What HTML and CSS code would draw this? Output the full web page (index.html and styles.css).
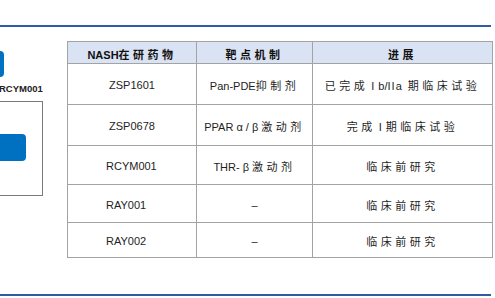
FILE: index.html
```html
<!DOCTYPE html>
<html lang="zh">
<head>
<meta charset="utf-8">
<link rel="stylesheet" href="styles.css">
</head>
<body>
<div class="page">
  <div class="rule rule-top"></div>
  <div class="content">
    <div class="side">
      <div class="node node-top"></div>
      <div class="node-label">RCYM001</div>
      <div class="frame">
        <div class="node node-inner"></div>
      </div>
    </div>
    <table class="pipeline">
      <colgroup>
        <col class="c1"><col class="c2"><col class="c3">
      </colgroup>
      <thead>
        <tr class="h-head">
          <th>NASH<span class="cjk">在研药物</span></th>
          <th><span class="cjk">靶点机制</span></th>
          <th><span class="cjk">进展</span></th>
        </tr>
      </thead>
      <tbody>
        <tr class="h41">
          <td>ZSP1601</td>
          <td>Pan-PDE<span class="cjk">抑制剂</span></td>
          <td><span class="cjk">已完成</span> <span class="roman">I</span> b/<span class="roman">II</span>a&nbsp; <span class="cjk">期临床试验</span></td>
        </tr>
        <tr class="h41">
          <td>ZSP0678</td>
          <td>PPAR α / β <span class="cjk">激动剂</span></td>
          <td><span class="cjk">完成</span> <span class="roman">I</span> <span class="cjk">期临床试验</span></td>
        </tr>
        <tr class="h39">
          <td class="id">RCYM001</td>
          <td>THR- β <span class="cjk">激动剂</span></td>
          <td><span class="cjk">临床前研究</span></td>
        </tr>
        <tr class="h38">
          <td class="id">RAY001</td>
          <td>–</td>
          <td><span class="cjk">临床前研究</span></td>
        </tr>
        <tr class="h35">
          <td class="id">RAY002</td>
          <td>–</td>
          <td><span class="cjk">临床前研究</span></td>
        </tr>
      </tbody>
    </table>
  </div>
  <div class="spacer"></div>
  <div class="rule rule-bottom"></div>
</div>
</body>
</html>
```

FILE: styles.css
```css
* { box-sizing: border-box; }
html, body {
  margin: 0;
  padding: 0;
  background: #ffffff;
}
body {
  width: 495px;
  height: 298px;
  overflow: hidden;
  font-family: "Liberation Sans", "Noto Sans CJK SC", sans-serif;
  color: #1e1e1e;
}
.page {
  width: 495px;
  height: 298px;
  display: flex;
  flex-direction: column;
}
.rule {
  width: 491px;
  background: #2d5da6;
}
.rule-top {
  margin-top: 25px;
  height: 2px;
}
.rule-bottom {
  height: 2px;
  margin-bottom: 2px;
  background: #2f5b9f;
}
.spacer { flex: 1; }
.content {
  display: flex;
  margin-top: 14px;
}
.side {
  width: 67px;
  flex: none;
  display: flex;
  flex-direction: column;
  align-items: flex-start;
}
.node {
  background: #0070c0;
  border-radius: 0 4px 4px 0;
}
.node-top {
  width: 4px;
  height: 26px;
  margin-top: 10px;
}
.node-label {
  margin-top: 6px;
  margin-left: -1px;
  font-size: 9.5px;
  font-weight: bold;
  line-height: 12px;
  color: #222;
}
.frame {
  margin-top: 6px;
  width: 43px;
  height: 95px;
  border: 1.5px solid #7a7a7a;
  border-left: none;
  padding-top: 32px;
}
.node-inner {
  width: 26px;
  height: 27px;
}
.pipeline {
  border-collapse: collapse;
  table-layout: fixed;
  width: 425px;
  font-size: 11px;
}
.c1 { width: 129px; }
.c2 { width: 116px; }
.c3 { width: 180px; }
.pipeline th,
.pipeline td {
  border: 1px solid #a3a3a3;
  text-align: center;
  vertical-align: middle;
  padding: 2px 0 0 0;
  white-space: nowrap;
}
.pipeline th {
  background: #dae3f3;
  font-weight: bold;
  color: #111;
  font-size: 11px;
}
.pipeline td.id {
  text-align: left;
  padding-left: 38px;
}
.cjk {
  letter-spacing: 3.5px;
}
.roman {
  font-family: "Liberation Sans", sans-serif;
  letter-spacing: 1px;
}
.h-head { height: 22px; }
.h41 { height: 41px; }
.h39 { height: 39px; }
.h38 { height: 38px; }
.h35 { height: 35px; }
```
